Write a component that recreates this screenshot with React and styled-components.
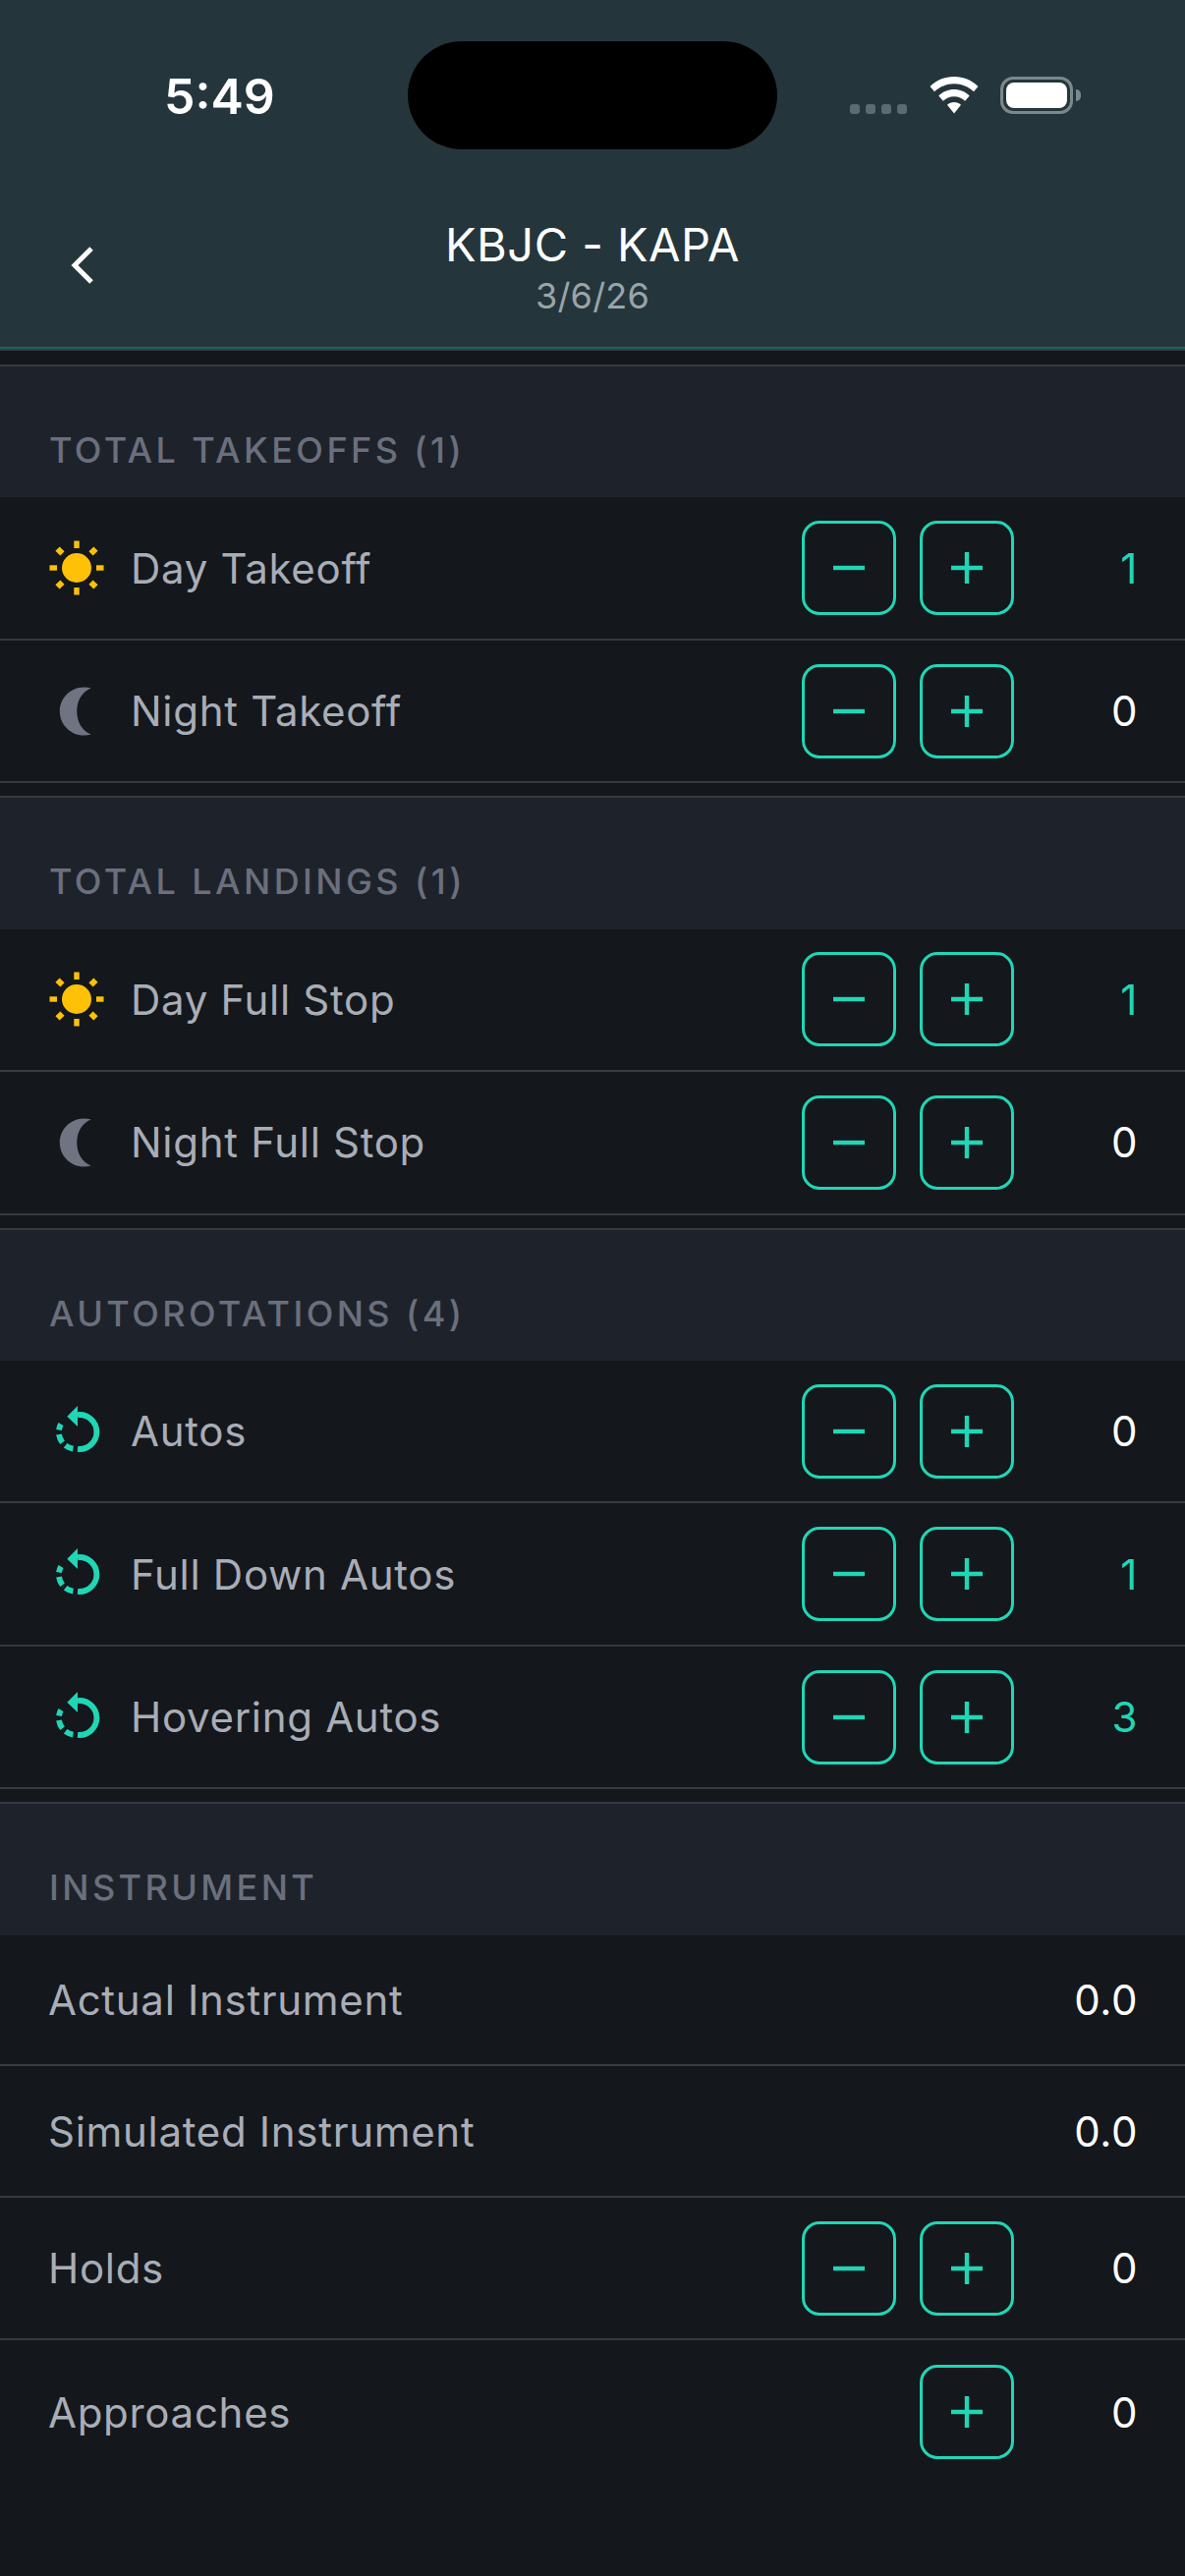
import React from "react";
import styled, { createGlobalStyle } from "styled-components";

const Global = createGlobalStyle`
  html, body { margin: 0; padding: 0; background: #14171c; }
  * { box-sizing: border-box; }
`;

const TEAL = "#20d6b5";

const Screen = styled.div`
  width: 1206px;
  height: 2622px;
  overflow: hidden;
  background: #14171c;
  font-family: Inter, "Liberation Sans", sans-serif;
`;
const Header = styled.header`
  height: 355px;
  background: #24363b;
  border-bottom: 2px solid #1a6560;
  display: flex;
  flex-direction: column;
`;
const StatusBar = styled.div`
  height: 221px;
  display: grid;
  grid-template-columns: 415px 376px 415px;
  align-items: start;
`;
const Time = styled.div`
  padding: 68px 0 0 167px;
  font-size: 50px;
  line-height: 60px;
  font-weight: 600;
  color: #fff;
`;
const Island = styled.div`
  margin-top: 42px;
  height: 110px;
  border-radius: 55px;
  background: #000;
`;
const StatusIcons = styled.div`
  padding: 78px 0 0 74px;
  display: flex;
  align-items: flex-end;
`;
const SignalDots = styled.div`
  display: flex;
  gap: 6px;
  margin-right: 23px;
`;
const Dot = styled.span`
  width: 10px;
  height: 10px;
  border-radius: 3px;
  background: #5b6c70;
`;
const WifiIcon = styled.svg`
  width: 50px;
  height: 38px;
  margin-right: 22px;
  display: block;
`;
const Battery = styled.div`
  width: 74px;
  height: 38px;
  border: 3.5px solid #7b898c;
  border-radius: 13px;
  padding: 3px;
  position: relative;
  &::before {
    content: "";
    display: block;
    height: 100%;
    border-radius: 8px;
    background: #fff;
  }
  &::after {
    content: "";
    position: absolute;
    right: -11px;
    top: 10px;
    width: 5px;
    height: 12px;
    border-radius: 0 6px 6px 0;
    background: #7b898c;
  }
`;
const NavBar = styled.div`
  display: grid;
  grid-template-columns: 1fr auto 1fr;
  align-items: center;
  padding: 0 70px;
`;
const BackIcon = styled.svg`
  width: 26px;
  height: 40px;
  display: block;
  margin-top: -4px;
`;
const TitleBlock = styled.div`
  text-align: center;
`;
const Title = styled.div`
  font-size: 47px;
  line-height: 56px;
  font-weight: 370;
  letter-spacing: 0.5px;
  color: #fff;
`;
const Subtitle = styled.div`
  margin-top: 2px;
  font-size: 36px;
  line-height: 44px;
  font-weight: 370;
  letter-spacing: 0.2px;
  color: #9aa4a9;
`;
const Section = styled.section`
  margin-top: 13px;
  border-top: 2px solid #363a41;
  &:first-of-type { margin-top: 0; }
`;
const TopLine = styled.div`
  height: 16px;
  border-top: 2px solid #363a41;
  background: #14171c;
`;
const SectionTitle = styled.h2`
  margin: 0;
  height: 133.33px;
  padding: 63px 50px 0;
  background: #1e232b;
  font-size: 36px;
  line-height: 44px;
  font-weight: 500;
  letter-spacing: 3.42px;
  color: #6b6f7d;
  text-transform: uppercase;
`;
const Row = styled.div`
  display: flex;
  align-items: center;
  height: ${(p) => (p.$tall ? "145.5px" : "133.5px")};
  padding: 0 48px 0 49px;
  border-bottom: ${(p) => (p.$last ? "none" : "2px solid #363a41")};
  background: #14171c;
`;
const IconSlot = styled.div`
  width: 56px;
  height: 56px;
  margin: 0 27px 0 1px;
  flex: none;
  svg { display: block; width: 56px; height: 56px; }
`;
const Label = styled.div`
  flex: 1;
  margin-top: 1px;
  font-size: 42px;
  line-height: 52px;
  font-weight: 370;
  letter-spacing: 0.7px;
  color: #a9adb6;
`;
const Controls = styled.div`
  display: flex;
  gap: 24px;
`;
const StepButton = styled.button`
  width: 96px;
  height: 96px;
  padding: 0;
  border: 3px solid ${TEAL};
  border-radius: 18px;
  background: transparent;
  display: flex;
  align-items: center;
  justify-content: center;
  svg { width: 34px; height: 34px; display: block; }
`;
const Value = styled.div`
  width: 126px;
  margin-top: 1px;
  text-align: right;
  font-size: 42px;
  line-height: 52px;
  font-weight: 370;
  letter-spacing: 0.6px;
  color: ${(p) => (p.$active ? TEAL : "#fff")};
`;

const Sun = () => (
  <svg viewBox="0 0 56 56" fill="#ffc107">
    <circle cx="28" cy="28" r="15" />
    <rect x="25.3" y="0.5" width="5.4" height="7.5" />
    <rect x="25.3" y="48" width="5.4" height="7.5" />
    <rect x="0.5" y="25.3" width="7.5" height="5.4" />
    <rect x="48" y="25.3" width="7.5" height="5.4" />
    <rect x="8" y="7.5" width="6" height="7" transform="rotate(-45 11 11)" />
    <rect x="42" y="7.5" width="6" height="7" transform="rotate(45 45 11)" />
    <rect x="8" y="41.5" width="6" height="7" transform="rotate(45 11 45)" />
    <rect x="42" y="41.5" width="6" height="7" transform="rotate(-45 45 45)" />
  </svg>
);
const Moon = () => (
  <svg viewBox="0.6 0.6 22.8 22.8" fill="#6f7382">
    <g transform="translate(24 0) scale(-1 1)">
      <path d="M9 2c-1.05 0-2.05.16-3 .46 3.6 1.27 5.9 5.06 5.9 9.54 0 4.48-2.3 8.27-5.9 9.54.95.3 1.95.46 3 .46 5.52 0 10-4.48 10-10S14.52 2 9 2z" />
    </g>
  </svg>
);
const Auto = () => (
  <svg viewBox="0 0 56 56" fill="none" stroke={TEAL} strokeWidth="5.8">
    <path d="M29 11.1A17.5 17.5 0 1 1 29 45.9" />
    <path d="M18.3 12.7L29 2V23Z" fill={TEAL} stroke="none" />
    <path d="M12 20.5A17.5 17.5 0 0 0 10 26.5" />
    <path d="M10 31A17.5 17.5 0 0 0 13.6 39.3" />
    <path d="M16.6 42.3A17.5 17.5 0 0 0 24.4 45.7" />
  </svg>
);
const Minus = () => (
  <svg viewBox="0 0 34 34" stroke={TEAL} strokeWidth="4.4">
    <path d="M1 17H33" />
  </svg>
);
const Plus = () => (
  <svg viewBox="0 0 34 34" stroke={TEAL} strokeWidth="4.4">
    <path d="M1 17H33M17 1V33" />
  </svg>
);

const ICONS = { sun: Sun, moon: Moon, auto: Auto };

const Item = ({ icon, label, value, minus = true, plus = true, last }) => {
  const Icon = ICONS[icon];
  const stepper = plus;
  return (
    <Row $tall={stepper} $last={last}>
      {Icon && (
        <IconSlot>
          <Icon />
        </IconSlot>
      )}
      <Label>{label}</Label>
      {stepper && (
        <Controls>
          {minus && (
            <StepButton aria-label="minus">
              <Minus />
            </StepButton>
          )}
          <StepButton aria-label="plus">
            <Plus />
          </StepButton>
        </Controls>
      )}
      <Value $active={icon && value !== "0"}>{value}</Value>
    </Row>
  );
};

export default function App() {
  return (
    <Screen>
      <Global />
      <Header>
        <StatusBar>
          <Time>5:49</Time>
          <Island />
          <StatusIcons>
            <SignalDots>
              <Dot />
              <Dot />
              <Dot />
              <Dot />
            </SignalDots>
            <WifiIcon viewBox="0 0 50 38" fill="#fff">
              <path d="M25 0C15.5 0 7 3.6 0.5 10L5 15.3C10.3 10.2 17.3 7.2 25 7.2S39.7 10.2 45 15.3L49.5 10C43 3.6 34.5 0 25 0Z" />
              <path d="M25 13C19 13 13.5 15.3 9.3 19.5L13.8 24.8C16.7 22 20.6 20.2 25 20.2S33.3 22 36.2 24.8L40.7 19.5C36.5 15.3 31 13 25 13Z" />
              <path d="M25 26C22.3 26 20 27 18 28.8L25 37.5L32 28.8C30 27 27.7 26 25 26Z" />
            </WifiIcon>
            <Battery />
          </StatusIcons>
        </StatusBar>
        <NavBar>
          <BackIcon viewBox="0 0 26 40" fill="none" stroke="#fff" strokeWidth="5">
            <path d="M23 3L6 20L23 37" />
          </BackIcon>
          <TitleBlock>
            <Title>KBJC - KAPA</Title>
            <Subtitle>3/6/26</Subtitle>
          </TitleBlock>
          <span />
        </NavBar>
      </Header>
      <TopLine />
      <Section>
        <SectionTitle>Total Takeoffs (1)</SectionTitle>
        <Item icon="sun" label="Day Takeoff" value="1" />
        <Item icon="moon" label="Night Takeoff" value="0" />
      </Section>
      <Section>
        <SectionTitle>Total Landings (1)</SectionTitle>
        <Item icon="sun" label="Day Full Stop" value="1" />
        <Item icon="moon" label="Night Full Stop" value="0" />
      </Section>
      <Section>
        <SectionTitle>Autorotations (4)</SectionTitle>
        <Item icon="auto" label="Autos" value="0" />
        <Item icon="auto" label="Full Down Autos" value="1" />
        <Item icon="auto" label="Hovering Autos" value="3" />
      </Section>
      <Section>
        <SectionTitle>Instrument</SectionTitle>
        <Item label="Actual Instrument" value="0.0" plus={false} />
        <Item label="Simulated Instrument" value="0.0" plus={false} />
        <Item label="Holds" value="0" />
        <Item label="Approaches" value="0" minus={false} last />
      </Section>
    </Screen>
  );
}
